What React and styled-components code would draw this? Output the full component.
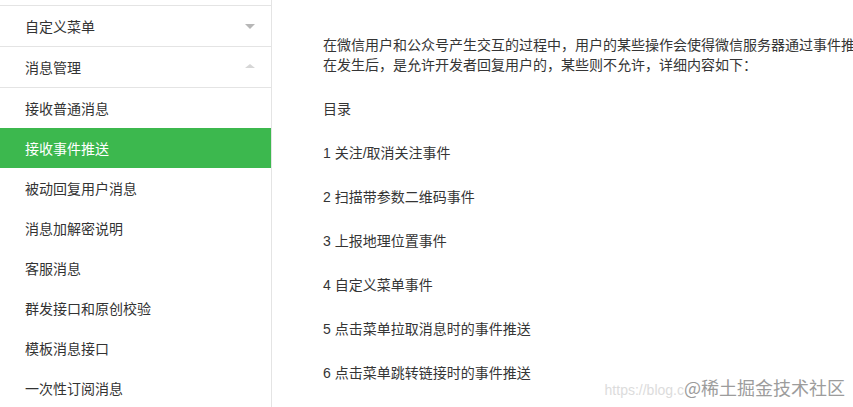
import React from "react";
import styled, { createGlobalStyle } from "styled-components";

const GlobalStyle = createGlobalStyle`
  html, body {
    margin: 0;
    padding: 0;
    background: #fff;
    overflow: hidden;
  }
  body {
    font-family: "Liberation Sans", "Noto Sans CJK SC", sans-serif;
    color: #353535;
  }
`;

const menuGroups = [
  { title: "自定义菜单", open: false },
  { title: "消息管理", open: true },
];

const subItems = [
  "接收普通消息",
  "接收事件推送",
  "被动回复用户消息",
  "消息加解密说明",
  "客服消息",
  "群发接口和原创校验",
  "模板消息接口",
  "一次性订阅消息",
];

const tocItems = [
  "1 关注/取消关注事件",
  "2 扫描带参数二维码事件",
  "3 上报地理位置事件",
  "4 自定义菜单事件",
  "5 点击菜单拉取消息时的事件推送",
  "6 点击菜单跳转链接时的事件推送",
];

export default function App() {
  return (
    <>
      <GlobalStyle />
      <StPage>
        <StSidebar>
          {menuGroups.map((g) => (
            <StGroup key={g.title}>
              <span>{g.title}</span>
              <StArrow $up={g.open} />
            </StGroup>
          ))}
          {subItems.map((t) => (
            <StItem key={t} $active={t === "接收事件推送"}>
              {t}
            </StItem>
          ))}
        </StSidebar>
        <StContent>
          <StPara>
            <span>
              在微信用户和公众号产生交互的过程中，用户的某些操作会使得微信服务器通过事件推送的形式通知到开发者在开发者模式中设置的服务器地址，从而开发者可以获取到该信息。其中，某些事件推送
            </span>
            <span>在发生后，是允许开发者回复用户的，某些则不允许，详细内容如下：</span>
          </StPara>
          <StPara>目录</StPara>
          {tocItems.map((t) => (
            <StPara key={t}>{t}</StPara>
          ))}
        </StContent>
        <StMark>
          <small>https://blog.c</small>@稀土掘金技术社区
        </StMark>
      </StPage>
    </>
  );
}

const StPage = styled.div`
  position: relative;
  display: flex;
  width: 853px;
  height: 407px;
  overflow: hidden;
`;

const StSidebar = styled.div`
  box-sizing: border-box;
  width: 272px;
  flex-shrink: 0;
  padding-top: 5px;
  border-right: 1px solid #e4e4e4;
  font-size: 14px;
  color: #333;
`;

const StGroup = styled.div`
  display: flex;
  align-items: center;
  justify-content: space-between;
  height: 40px;
  padding: 0 16px 0 25px;
  border-top: 1px solid #e4e4e4;
  &:nth-child(2) {
    border-bottom: 1px solid #e4e4e4;
  }
`;

const StArrow = styled.i`
  width: 0;
  height: 0;
  border-left: 5px solid transparent;
  border-right: 5px solid transparent;
  ${(p) =>
    p.$up
      ? "border-bottom: 4px solid #d6d6d6; margin-top: -2px;"
      : "border-top: 5px solid #b7b7b7; margin-top: 1px;"}
`;

const StItem = styled.div`
  display: flex;
  align-items: center;
  height: 40px;
  padding-left: 25px;
  background: ${(p) => (p.$active ? "#3cb84e" : "transparent")};
  color: ${(p) => (p.$active ? "#fff" : "#333")};
`;

const StContent = styled.div`
  flex: 1;
  min-width: 0;
  padding: 35px 0 0 51px;
  font-size: 14px;
  color: #353535;
`;

const StPara = styled.p`
  margin: 0 0 24px;
  line-height: 20px;
  white-space: nowrap;
  span {
    display: block;
  }
`;

const StMark = styled.div`
  position: absolute;
  right: 8px;
  bottom: 7px;
  display: flex;
  align-items: baseline;
  font-family: "Noto Sans CJK SC", sans-serif;
  font-size: 18px;
  color: #9c9c9c;
  text-shadow: 0 0 2px #fff;
  small {
    font-family: "Liberation Sans", sans-serif;
    font-size: 14px;
    color: #dcdcdc;
  }
`;
